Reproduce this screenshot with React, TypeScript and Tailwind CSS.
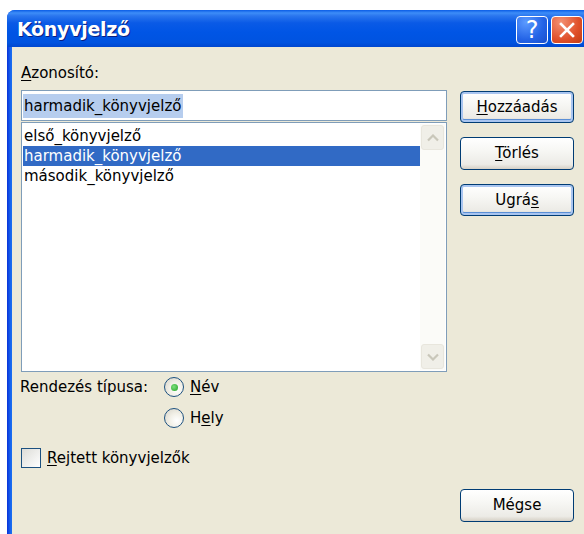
import type { ReactNode } from 'react';

const FONT = { fontFamily: '"DejaVu Sans", Tahoma, sans-serif' };

const bookmarks = ['első_könyvjelző', 'harmadik_könyvjelző', 'második_könyvjelző'];

function Btn({ children, focused = false, className = '' }: { children: ReactNode; focused?: boolean; className?: string }) {
  return (
    <button
      className={`w-[114px] h-[32px] rounded-[4px] border border-[#003C74] text-[15px] text-black bg-[linear-gradient(to_bottom,#ffffff_0%,#f7f7f4_40%,#ecebe6_85%,#d6d0c5_100%)] ${
        focused ? 'shadow-[inset_0_0_0_2px_#A9C5F0,inset_0_-1px_0_2px_#5B8FD6]' : ''
      } ${className}`}
    >
      {children}
    </button>
  );
}

function Radio({ checked }: { checked?: boolean }) {
  return (
    <span className="w-[20px] h-[20px] rounded-full border border-[#1C5180] bg-[radial-gradient(circle_at_65%_65%,#ffffff_0%,#f1efe6_45%,#d4d1c6_100%)] flex items-center justify-center">
      {checked && <span className="w-[7px] h-[7px] rounded-full bg-[radial-gradient(circle_at_40%_40%,#7EE07E,#21A121)]" />}
    </span>
  );
}

function ScrollArrow({ up }: { up?: boolean }) {
  return (
    <div className="h-[25px] w-full rounded-[3px] bg-[#F0EFE8] border border-[#E8E6DD] flex items-center justify-center">
      <svg width="12" height="8" viewBox="0 0 12 8">
        <path d={up ? 'M1 6.5 6 1.5 11 6.5' : 'M1 1.5 6 6.5 11 1.5'} fill="none" stroke="#C9C7BA" strokeWidth="2.2" />
      </svg>
    </div>
  );
}

export default function App() {
  return (
    <div className="w-[584px] h-[534px] overflow-hidden bg-white pt-[10px] pl-[7px]" style={FONT}>
      <div className="w-[600px] h-[540px] rounded-t-[8px] bg-[linear-gradient(to_right,#0831D9,#1A6CF0_4px)] flex flex-col">
        {/* title bar */}
        <div className="h-[37px] rounded-t-[8px] flex items-center bg-[linear-gradient(to_bottom,#0A5CE6_0%,#3D8DF8_8%,#2A76EE_16%,#0A5AE6_35%,#0055E5_60%,#0053E0_88%,#0047CF_100%)]">
          <span className="ml-[10px] mt-[2px] text-white font-bold text-[19px] tracking-[-0.3px] [text-shadow:1px_1px_0_#0A1E80]">
            Könyvjelző
          </span>
          <div className="ml-auto mr-[24px] flex gap-[3px] pt-[3px]">
            <div className="w-[32px] h-[28px] rounded-[4px] border border-white bg-[radial-gradient(circle_at_30%_20%,#5C9BFF,#2363E6_60%,#1A4FCC)] flex items-center justify-center text-white text-[24px] leading-none">
              ?
            </div>
            <div className="w-[32px] h-[28px] rounded-[4px] border border-white bg-[radial-gradient(circle_at_30%_20%,#F39173,#E0502A_60%,#C23C14)] flex items-center justify-center">
              <svg width="16" height="16" viewBox="0 0 16 16">
                <path d="M2 2 14 14M14 2 2 14" stroke="white" strokeWidth="2.6" strokeLinecap="square" />
              </svg>
            </div>
          </div>
        </div>

        {/* client area */}
        <div className="flex-1 ml-[5px] bg-[#ECE9D8] flex text-[15px] text-black">
          <div className="ml-[9px] w-[426px] flex flex-col">
            <div className="mt-[17px] h-[18px] leading-[18px]">
              <span className="underline underline-offset-2">A</span>zonosító:
            </div>
            <div className="mt-[8px] h-[31px] border border-[#7F9DB9] bg-white flex items-center pl-[1px]">
              <span className="bg-[#B6CDEE] px-[1px] leading-[24px]">harmadik_könyvjelző</span>
            </div>
            <div className="mt-[1px] h-[250px] border border-[#7F9DB9] bg-white flex p-[1px]">
              <div className="flex-1 flex flex-col pt-[2px]">
                {bookmarks.map((b, i) => (
                  <div
                    key={b}
                    className={`h-[20px] leading-[20px] pl-[1px] ${i === 1 ? 'bg-[#316AC5] text-white' : ''}`}
                  >
                    {b}
                  </div>
                ))}
              </div>
              <div className="w-[25px] bg-[#FBFBF8] flex flex-col justify-between p-[1px]">
                <ScrollArrow up />
                <ScrollArrow />
              </div>
            </div>

            <div className="mt-[4px] h-[22px] flex items-center">
              <span className="w-[144px] -ml-[1px]">Rendezés típusa:</span>
              <Radio checked />
              <span className="ml-[6px]">
                <span className="underline underline-offset-2">N</span>év
              </span>
            </div>
            <div className="mt-[9px] h-[22px] flex items-center pl-[143px]">
              <Radio />
              <span className="ml-[6px]">
                H<span className="underline underline-offset-2">e</span>ly
              </span>
            </div>
            <div className="mt-[18px] h-[22px] flex items-center">
              <span className="w-[20px] h-[20px] border border-[#1C5180] bg-[linear-gradient(135deg,#DCDCD7,#ffffff)]" />
              <span className="ml-[6px]">
                <span className="underline underline-offset-2">R</span>ejtett könyvjelzők
              </span>
            </div>
          </div>

          <div className="ml-[13px] flex flex-col">
            <Btn focused className="mt-[44px]">
              <span className="underline underline-offset-2">H</span>ozzáadás
            </Btn>
            <Btn className="mt-[14px] h-[33px]">
              <span className="underline underline-offset-2">T</span>örlés
            </Btn>
            <Btn focused className="mt-[14px]">
              Ugrá<span className="underline underline-offset-2">s</span>
            </Btn>
            <Btn className="mt-[273px] h-[33px]">Mégse</Btn>
          </div>
        </div>
      </div>
    </div>
  );
}
